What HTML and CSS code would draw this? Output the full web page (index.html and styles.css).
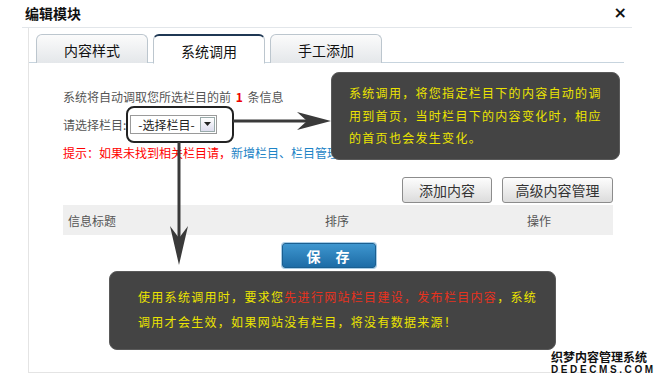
FILE: index.html
```html
<!DOCTYPE html>
<html lang="zh-CN">
<head>
<meta charset="utf-8">
<title>编辑模块</title>
<link rel="stylesheet" href="styles.css">
</head>
<body>
<div class="dialog">
  <div class="header">
    <span class="title">编辑模块</span>
    <span class="close">×</span>
  </div>
  <div class="panel">
    <div class="tabs">
      <div class="tab">内容样式</div>
      <div class="tab active">系统调用</div>
      <div class="tab">手工添加</div>
    </div>
    <div class="content">
      <div class="line1">系统将自动调取您所选栏目的前 <b class="num">1</b> 条信息</div>
      <div class="line2">
        <span>请选择栏目:</span>
        <div class="select"><span class="sel-text">-选择栏目-</span><span class="sel-btn"><svg width="7" height="4" viewBox="0 0 7 4"><path d="M0 0H7L3.5 4Z" fill="#222"/></svg></span></div>
      </div>
      <div class="line3"><span class="red">提示：如果未找到相关栏目请，</span><span class="blue">新增栏目、栏目管理</span></div>
      <div class="btnrow">
        <button class="btn">添加内容</button>
        <button class="btn">高级内容管理</button>
      </div>
      <div class="thead">
        <span class="c1">信息标题</span>
        <span class="c2">排序</span>
        <span class="c3">操作</span>
      </div>
      <div class="saverow"><button class="save">保 存</button></div>
    </div>
  </div>
</div>

<div class="callout"></div>
<svg class="arrows" width="660" height="384" viewBox="0 0 660 384">
  <line x1="233" y1="121" x2="310" y2="121" stroke="#3a3a3a" stroke-width="3"/>
  <path d="M331 121 L297 112 L307 121 L297 130 Z" fill="#3a3a3a"/>
  <line x1="179" y1="142" x2="179" y2="245" stroke="#3a3a3a" stroke-width="3"/>
  <path d="M179 265 L170 226 L179 238 L188 226 Z" fill="#3a3a3a"/>
</svg>

<div class="tip tip1">系统调用，将您指定栏目下的内容自动的调<br>用到首页，当时栏目下的内容变化时，相应<br>的首页也会发生变化。</div>
<div class="tip tip2">使用系统调用时，要求您<span class="tred">先进行网站栏目建设，发布栏目内容</span>，系统<br>调用才会生效，如果网站没有栏目，将没有数据来源！</div>

<div class="mark">
  <div class="mark1">织梦内容管理系统</div>
  <div class="mark2">DEDECMS.COM</div>
</div>
</body>
</html>
```

FILE: styles.css
```css
* { box-sizing: border-box; }
html, body { margin: 0; padding: 0; }
body {
  width: 660px;
  height: 384px;
  background: #fff;
  font-family: "Noto Sans CJK SC", "DejaVu Sans", sans-serif;
  font-size: 12px;
  color: #555;
  position: relative;
  overflow: hidden;
}
.dialog { padding-left: 22px; }
.header {
  height: 28px;
  display: flex;
  justify-content: space-between;
  align-items: center;
  padding: 0 5px 2px 3px;
  border-bottom: 1px solid #e2e6ea;
  width: 610px;
}
.title { font-size: 14px; font-weight: bold; color: #111; }
.close { font-size: 16px; font-weight: bold; color: #111; font-family: "DejaVu Sans", sans-serif; }
.panel {
  margin-left: 6px;
  width: 604px;
  height: 345px;
  border-left: 1px solid #e4e4e4;
  border-bottom: 1px solid #e4e4e4;
}
.tabs {
  display: flex;
  gap: 5px;
  padding: 6px 0 0 7px;
  width: 595px;
  border-bottom: 1px solid #c7d4de;
  height: 35px;
}
.tab {
  width: 112px;
  height: 29px;
  margin-bottom: -1px;
  border: 1px solid #bcc6ce;
  border-bottom: none;
  border-radius: 6px 6px 0 0;
  background: linear-gradient(#fbfbfb, #e4e7ea);
  font-size: 14px;
  color: #111;
  display: flex;
  align-items: center;
  justify-content: center;
  padding-top: 2px;
}
.tab.active {
  background: #fff;
  border-top: 2px solid #1f3854;
  border-bottom: 1px solid #fff;
  height: 30px;
}
.content { padding: 0 19px 0 34px; }
.line1 { margin-top: 25px; height: 18px; line-height: 18px; white-space: nowrap; }
.num { color: #e00; font-weight: bold; margin: 0 2px; }
.line2 { margin-top: 8px; display: flex; align-items: center; gap: 4px; height: 20px; }
.select {
  width: 87px;
  height: 19px;
  border: 1px solid #9a9a9a;
  display: flex;
  align-items: center;
  justify-content: space-between;
  padding: 0 1px 0 7px;
  color: #222;
  font-size: 12px;
}
.sel-btn {
  width: 15px;
  height: 15px;
  border: 1px solid #9aa;
  background: linear-gradient(#fff, #dde);
  display: flex;
  align-items: center;
  justify-content: center;
}
.line3 { margin-top: 10px; height: 18px; line-height: 18px; white-space: nowrap; }
.red { color: #f00; }
.blue { color: #1d84c6; }
.btnrow { margin-top: 15px; display: flex; justify-content: flex-end; gap: 10px; }
.btn {
  height: 26px;
  padding: 0 12px;
  border: 1px solid #8c8c8c;
  border-radius: 3px;
  background: linear-gradient(#fdfdfd, #dcdcdc);
  font-family: inherit;
  font-size: 14px;
  color: #333;
}
.btn:first-child { width: 90px; }
.btn:last-child { width: 111px; }
.thead {
  margin-top: 2px;
  height: 30px;
  background: #efefef;
  display: flex;
  align-items: center;
  padding-left: 5px;
  color: #555;
}
.thead .c1 { width: 243px; }
.thead .c2 { width: 52px; text-align: center; }
.thead .c3 { width: 52px; text-align: center; margin-left: 150px; }
.saverow { margin-top: 8px; padding-left: 219px; }
.save {
  width: 94px;
  height: 25px;
  border: 1px solid #1b5f90;
  border-radius: 3px;
  background: linear-gradient(#3e96cf, #1d6ca6);
  box-shadow: 0 0 0 1px #a9cde6;
  color: #fff;
  font-family: inherit;
  font-weight: bold;
  font-size: 14px;
  letter-spacing: 6px;
  padding-left: 10px;
}
.callout {
  position: absolute;
  left: 126px;
  top: 106px;
  width: 108px;
  height: 37px;
  border: 2px solid #222;
  border-radius: 8px;
}
.arrows { position: absolute; left: 0; top: 0; pointer-events: none; }
.tip {
  position: absolute;
  background: #444;
  border: 1px solid #5a5a5a;
  border-radius: 8px;
  color: #ece400;
  font-size: 12px;
  letter-spacing: 1.3px;
  white-space: nowrap;
}
.tip1 { left: 331px; top: 72px; width: 289px; height: 88px; padding: 9px 0 0 17px; line-height: 22.5px; }
.tip2 { left: 109px; top: 271px; width: 447px; height: 79px; padding: 12px 0 0 28px; line-height: 25px; }
.tred { color: #e8321e; }
.mark {
  position: absolute;
  left: 551px;
  top: 350px;
  font-weight: bold;
  color: #111;
  text-shadow: 1px 0 #fff, -1px 0 #fff, 0 1px #fff, 0 -1px #fff;
  line-height: 13px;
  white-space: nowrap;
}
.mark1 { font-size: 12px; letter-spacing: 0; }
.mark2 { font-size: 10px; letter-spacing: 2.6px; font-family: "Liberation Sans", sans-serif; }
```
